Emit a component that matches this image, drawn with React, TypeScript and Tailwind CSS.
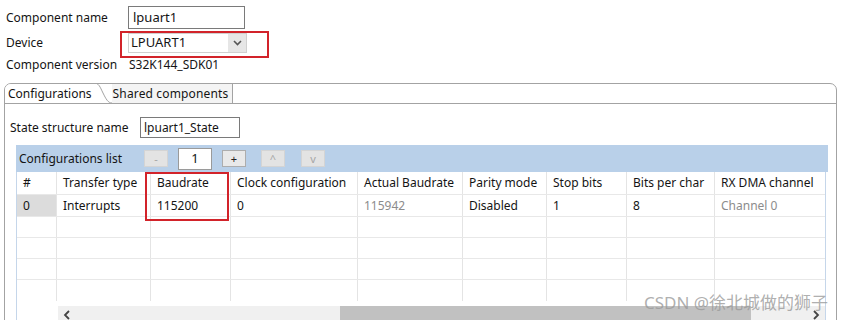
import React from 'react';

const COLS = [40, 94, 80, 127, 105, 84, 80, 88, 112];

const HEADERS = ['#', 'Transfer type', 'Baudrate', 'Clock configuration', 'Actual Baudrate', 'Parity mode', 'Stop bits', 'Bits per char', 'RX DMA channel'];

const ROW0: { text: string; dim?: boolean }[] = [
  { text: '0' },
  { text: 'Interrupts' },
  { text: '115200' },
  { text: '0' },
  { text: '115942', dim: true },
  { text: 'Disabled' },
  { text: '1' },
  { text: '8' },
  { text: 'Channel 0', dim: true },
];

const gridCols = 'grid grid-cols-[40px_94px_80px_127px_105px_84px_80px_88px_112px]';

const SmallButton: React.FC<{ label: string; disabled?: boolean }> = ({ label, disabled }) => (
  <div
    className={`flex h-[17px] w-[24px] items-center justify-center border text-[11px] leading-none ${
      disabled ? 'border-[#d4d4d4] bg-[#e3e3e3] text-[#a6a6a6]' : 'border-[#adadad] bg-[#e9e9e9] text-[#222]'
    }`}
  >
    {label}
  </div>
);

export default function App() {
  return (
    <div className="relative h-[320px] w-[841px] overflow-hidden bg-white font-['Noto_Sans','Liberation_Sans',sans-serif] text-[12px] text-[#141414]">
      <div className="px-[4px] pt-[6px]">
        {/* top fields */}
        <div className="flex h-[23px] items-center pl-[2px]">
          <span className="w-[122px]">Component name</span>
          <div className="flex h-[23px] w-[117px] items-center border border-[#7a7a7a] pl-[4px] text-[13px]">lpuart1</div>
        </div>
        <div className="mt-[4px] flex h-[20px] items-center pl-[2px]">
          <span className="w-[122px]">Device</span>
          <div className="flex h-[20px] w-[119px] items-center border border-[#d0d0d0] bg-white pl-[2px] text-[13px]">
            <span className="flex-1">LPUART1</span>
            <div className="flex h-full w-[18px] items-center justify-center bg-[#e6e6e6]">
              <svg width="9" height="6" viewBox="0 0 9 6">
                <path d="M1 1 L4.5 4.5 L8 1" fill="none" stroke="#555" strokeWidth="1.6" />
              </svg>
            </div>
          </div>
        </div>
        <div className="mt-[3px] flex h-[17px] items-center pl-[2px]">
          <span className="w-[123px]">Component version</span>
          <span>S32K144_SDK01</span>
        </div>

        {/* tab folder */}
        <div className="mt-[10px] h-[240px] rounded-t-[7px] border border-[#a3a3a3]">
          <div className="flex h-[20px] items-end border-b border-[#a3a3a3]">
            <div className="flex h-full items-center rounded-tl-[6px] bg-white pl-[3px] pr-[4px]">Configurations</div>
            <svg width="18" height="20" viewBox="0 0 18 20" className="-ml-[2px]">
              <path d="M0 0 C5 0 6 4 9 10 C12 16 14 20 18 20" fill="none" stroke="#a3a3a3" strokeWidth="1" />
            </svg>
            <div className="flex h-full items-center border-r border-[#a3a3a3] bg-[#f4f4f4] pl-[1px] pr-[4px] tracking-[0.15px]">
              Shared components
            </div>
          </div>

          <div className="pl-[5px] pt-[13px]">
            <div className="flex h-[21px] items-center">
              <span className="w-[130px]">State structure name</span>
              <div className="flex h-[21px] w-[100px] items-center border border-[#7a7a7a] pl-[3px]">lpuart1_State</div>
            </div>

            {/* configurations list */}
            <div className="ml-[6px] mt-[7px] w-[812px]">
              <div className="flex h-[27px] items-center bg-[#b9d0e9] pl-[3px]">
                <span className="w-[125px]">Configurations list</span>
                <SmallButton label="-" disabled />
                <div className="ml-[10px] flex h-[22px] w-[34px] items-center justify-center border border-[#9a9a9a] bg-white text-[13px]">1</div>
                <div className="ml-[10px]">
                  <SmallButton label="+" />
                </div>
                <div className="ml-[15px]">
                  <SmallButton label="^" disabled />
                </div>
                <div className="ml-[16px]">
                  <SmallButton label="v" disabled />
                </div>
              </div>

              <div className="h-[200px] w-[810px] border-l border-r border-[#c5d6ea]">
                <div className={`${gridCols} h-[23px] border-b border-[#e8e8e8]`}>
                  {HEADERS.map((h, i) => (
                    <div key={h} className={`flex items-center border-[#e4e4e4] pl-[6px] ${i < COLS.length - 1 ? 'border-r' : ''}`}>
                      {h}
                    </div>
                  ))}
                </div>
                <div className={`${gridCols} h-[22px] border-b border-[#e8e8e8]`}>
                  {ROW0.map((c, i) => (
                    <div
                      key={i}
                      className={`flex items-center border-[#e4e4e4] pl-[6px] ${i < COLS.length - 1 ? 'border-r' : ''} ${
                        i === 0 ? 'bg-[#dcdcdc]' : ''
                      } ${c.dim ? 'text-[#8c8c8c]' : ''}`}
                    >
                      {c.text}
                    </div>
                  ))}
                </div>
                {[0, 1, 2, 3].map((r) => (
                  <div key={r} className={`${gridCols} h-[21px] ${r < 3 ? 'border-b border-[#e8e8e8]' : ''}`}>
                    {COLS.map((_, i) => (
                      <div key={i} className={`border-[#e4e4e4] ${i < COLS.length - 1 ? 'border-r' : ''}`} />
                    ))}
                  </div>
                ))}
                <div className="mt-[5px] flex h-[17px]">
                  <div className="w-[41px]" />
                  <div className="flex flex-1 items-center bg-[#f0f0f0]">
                    <div className="flex w-[282px] items-center pl-[5px]">
                      <svg width="8" height="10" viewBox="0 0 8 10">
                        <path d="M6 1 L2 5 L6 9" fill="none" stroke="#444" strokeWidth="1.8" />
                      </svg>
                    </div>
                    <div className="h-full w-[411px] bg-[#c1c1c1]" />
                    <div className="flex flex-1 items-center justify-end pr-[5px]">
                      <svg width="8" height="10" viewBox="0 0 8 10">
                        <path d="M2 1 L6 5 L2 9" fill="none" stroke="#444" strokeWidth="1.8" />
                      </svg>
                    </div>
                  </div>
                </div>
              </div>
            </div>
          </div>
        </div>
      </div>

      {/* red annotation boxes */}
      <div className="pointer-events-none absolute left-[120px] top-[31px] h-[27px] w-[149px] border-2 border-[#d2232a]" />
      <div className="pointer-events-none absolute left-[145px] top-[172px] h-[49px] w-[84px] border-2 border-[#d2232a]" />

      {/* watermark */}
      <div className="pointer-events-none absolute left-[644px] top-[290px] font-['Noto_Sans','Noto_Sans_CJK_SC',sans-serif] text-[17px] text-[#9a9a9a]/80">
        CSDN @徐北城做的狮子
      </div>
    </div>
  );
}
